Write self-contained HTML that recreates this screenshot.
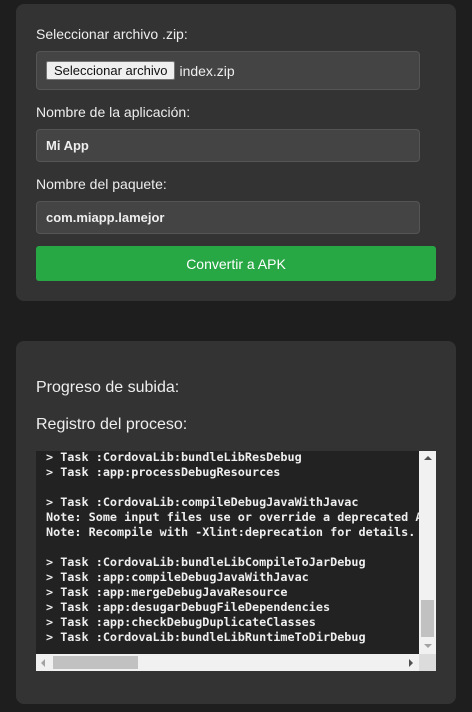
<!DOCTYPE html>
<html><head><meta charset="utf-8"><style>
*{box-sizing:border-box;margin:0;padding:0}
body{width:472px;height:712px;background:#1e1e1e;font-family:"Liberation Sans",sans-serif;color:#eee;position:relative;overflow:hidden}
.card{position:absolute;left:16px;width:440px;background:#333;border-radius:8px}
.lbl{position:absolute;left:36px;font-size:14px;color:#eee}
.inp{position:absolute;left:36px;width:384px;background:#444;border:1px solid #555;border-radius:4px;font-size:13px;font-weight:bold;color:#eee;padding-left:9px;display:flex;align-items:center}
.btn{position:absolute;left:36px;top:246px;width:400px;height:35px;background:#28a745;border-radius:3px;color:#fff;font-size:14px;display:flex;align-items:center;justify-content:center}
.log{position:absolute;left:36px;top:451px;width:400px;height:220px;background:#222;overflow:hidden}
.log pre{position:absolute;left:10px;top:-1px;font-family:"DejaVu Sans Mono","Liberation Mono",monospace;font-size:11.8px;line-height:15px;color:#eee;font-weight:bold;white-space:pre}
.vs{position:absolute;left:383px;top:0;width:17px;height:203px;background:#f1f1f1}
.hs{position:absolute;left:0;top:203px;width:400px;height:17px;background:#f1f1f1}
.corner{position:absolute;left:383px;top:203px;width:17px;height:17px;background:#dcdcdc}
</style></head><body>
<div class="card" style="top:4px;height:297px"></div>
<div class="card" style="top:341px;height:363px"></div>
<div class="lbl" style="top:26px">Seleccionar archivo .zip:</div>
<div class="inp" style="top:51px;height:39px"><span style="background:#efefef;border:1px solid #767676;color:#111;font-weight:normal;font-size:13px;padding:1px 7px;border-radius:2px;margin-right:4px">Seleccionar archivo</span><span style="font-weight:normal;font-size:14px">index.zip</span></div>
<div class="lbl" style="top:104px">Nombre de la aplicación:</div>
<div class="inp" style="top:129px;height:33px">Mi App</div>
<div class="lbl" style="top:176px">Nombre del paquete:</div>
<div class="inp" style="top:201px;height:33px">com.miapp.lamejor</div>
<div class="btn">Convertir a APK</div>
<div class="lbl" style="top:379px;font-size:16px">Progreso de subida:</div>
<div class="lbl" style="top:416px;font-size:16px">Registro del proceso:</div>
<div class="log"><pre>&gt; Task :CordovaLib:bundleLibResDebug
&gt; Task :app:processDebugResources

&gt; Task :CordovaLib:compileDebugJavaWithJavac
Note: Some input files use or override a deprecated API.
Note: Recompile with -Xlint:deprecation for details.

&gt; Task :CordovaLib:bundleLibCompileToJarDebug
&gt; Task :app:compileDebugJavaWithJavac
&gt; Task :app:mergeDebugJavaResource
&gt; Task :app:desugarDebugFileDependencies
&gt; Task :app:checkDebugDuplicateClasses
&gt; Task :CordovaLib:bundleLibRuntimeToDirDebug</pre>
<div class="vs"><div style="position:absolute;left:5px;top:5px;border:4px solid transparent;border-bottom:4px solid #505050;border-top:none"></div><div style="position:absolute;left:2px;top:149px;width:13px;height:37px;background:#c1c1c1"></div><div style="position:absolute;left:5px;top:193px;border:4px solid transparent;border-top:4px solid #a3a3a3;border-bottom:none"></div></div>
<div class="hs"><div style="position:absolute;left:5px;top:5px;border:4px solid transparent;border-right:4px solid #a3a3a3;border-left:none"></div><div style="position:absolute;left:17px;top:2px;width:85px;height:13px;background:#c1c1c1"></div><div style="position:absolute;left:373px;top:5px;border:4px solid transparent;border-left:4px solid #505050;border-right:none"></div></div>
<div class="corner"></div>
</div>
</body></html>
